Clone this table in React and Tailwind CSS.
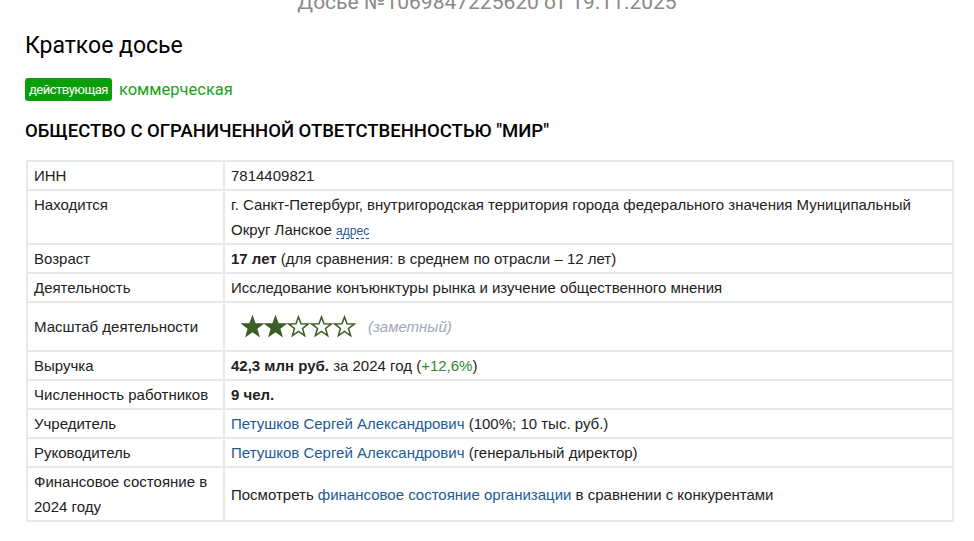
import React from "react";

function Star({ filled }) {
  return (
    <svg width="23" height="23" viewBox="0 0 24 23" className="block">
      <path
        d="M12 1.5 L14.6 8.6 L22.3 8.8 L16.2 13.5 L18.4 21 L12 16.6 L5.6 21 L7.8 13.5 L1.7 8.8 L9.4 8.6 Z"
        fill={filled ? "#3d5e22" : "#ffffff"}
        stroke="#3d5e22"
        strokeWidth="1.6"
        strokeLinejoin="miter"
      />
    </svg>
  );
}

const Row = ({ label, children }) => (
  <tr>
    <td className="border-2 border-[#e8e8e8] px-[6px] py-px align-top w-[197px]">{label}</td>
    <td className="border-2 border-[#e8e8e8] px-[6px] py-px align-top">{children}</td>
  </tr>
);

export default function App() {
  const link = "text-[#1d5a96]";
  return (
    <div className="bg-white w-[974px] h-[541px] overflow-hidden font-['Liberation_Sans',Arial,sans-serif] text-[#222]">
      <div className="text-center text-[21px] leading-[24px] text-[#8a8a8a] mt-[-10px] font-['Roboto',sans-serif]">
        Досье №1069847225620 от 19.11.2025
      </div>
      <div className="px-[25px]">
        <h1 className="mt-[18px] text-[23px] leading-[28px] text-black font-['Roboto',sans-serif]">Краткое досье</h1>
        <div className="mt-[18px] h-[23px] flex items-center gap-[7px]">
          <span className="bg-[#0a9f0a] text-white rounded-[3px] text-[13px] leading-[23px] h-[23px] px-[4px] tracking-[-0.5px] font-['Roboto',sans-serif]">действующая</span>
          <span className="text-[#17a317] text-[16.5px] leading-[23px] font-['Roboto',sans-serif]">коммерческая</span>
        </div>
        <h2 className="mt-[19px] text-[18.5px] leading-[22px] font-medium text-black font-['Roboto',sans-serif]">
          ОБЩЕСТВО С ОГРАНИЧЕННОЙ ОТВЕТСТВЕННОСТЬЮ "МИР"
        </h2>
        <table className="mt-[18px] w-[928px] border-collapse text-[15px] leading-[25px] ml-px">
          <tbody>
            <Row label="ИНН">7814409821</Row>
            <Row label="Находится">
              г. Санкт-Петербург, внутригородская территория города федерального значения Муниципальный Округ Ланское{" "}
              <span className={`${link} text-[12px] border-b border-dashed border-[#1d5a96] leading-[14px]`}>адрес</span>
            </Row>
            <Row label="Возраст">
              <b>17 лет</b> (для сравнения: в среднем по отрасли – 12 лет)
            </Row>
            <Row label="Деятельность">Исследование конъюнктуры рынка и изучение общественного мнения</Row>
            <tr>
              <td className="border-2 border-[#e8e8e8] px-[6px] align-middle h-[49px]">Масштаб деятельности</td>
              <td className="border-2 border-[#e8e8e8] px-[6px] align-middle">
                <div className="flex items-center pl-[10px]">
                  <Star filled />
                  <Star filled />
                  <Star />
                  <Star />
                  <Star />
                  <span className="ml-[12px] italic text-[#a0a8b8]">(заметный)</span>
                </div>
              </td>
            </tr>
            <Row label="Выручка">
              <b>42,3 млн руб.</b> за 2024 год (<span className="text-[#2e8b2e]">+12,6%</span>)
            </Row>
            <Row label="Численность работников">
              <b>9 чел.</b>
            </Row>
            <Row label="Учредитель">
              <span className={link}>Петушков Сергей Александрович</span> (100%; 10 тыс. руб.)
            </Row>
            <Row label="Руководитель">
              <span className={link}>Петушков Сергей Александрович</span> (генеральный директор)
            </Row>
            <tr>
              <td className="border-2 border-[#e8e8e8] px-[6px] py-[1px] align-top">Финансовое состояние в 2024 году</td>
              <td className="border-2 border-[#e8e8e8] px-[6px] align-middle">
                Посмотреть <span className={link}>финансовое состояние организации</span> в сравнении с конкурентами
              </td>
            </tr>
          </tbody>
        </table>
      </div>
    </div>
  );
}
